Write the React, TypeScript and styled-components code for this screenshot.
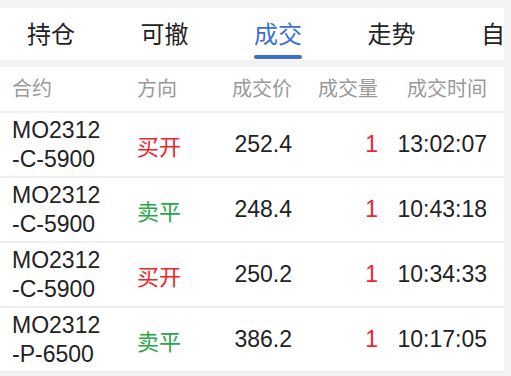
import styled, { createGlobalStyle } from "styled-components";

const GlobalStyle = createGlobalStyle`
  html, body {
    margin: 0;
    padding: 0;
    background: #f3f3f4;
  }
  body {
    font-family: "Liberation Sans", "Noto Sans CJK SC", sans-serif;
    -webkit-font-smoothing: antialiased;
  }
`;

type Side = "buy" | "sell";

const tabs = ["持仓", "可撤", "成交", "走势", "自选"];

const trades: {
  id: number;
  code: string;
  series: string;
  side: Side;
  price: string;
  volume: number;
  time: string;
}[] = [
  { id: 1, code: "MO2312", series: "-C-5900", side: "buy", price: "252.4", volume: 1, time: "13:02:07" },
  { id: 2, code: "MO2312", series: "-C-5900", side: "sell", price: "248.4", volume: 1, time: "10:43:18" },
  { id: 3, code: "MO2312", series: "-C-5900", side: "buy", price: "250.2", volume: 1, time: "10:34:33" },
  { id: 4, code: "MO2312", series: "-P-6500", side: "sell", price: "386.2", volume: 1, time: "10:17:05" },
];

const sideLabel: Record<Side, string> = { buy: "买开", sell: "卖平" };

const App = () => {
  return (
    <Page>
      <GlobalStyle />
      <TabBar>
        {tabs.map((tab) => (
          <Tab key={tab} $active={tab === "成交"}>
            <TabLabel>{tab}</TabLabel>
            <Indicator $visible={tab === "成交"} />
          </Tab>
        ))}
      </TabBar>
      <Table>
        <HeaderRow>
          <HeadCell>合约</HeadCell>
          <HeadCell>方向</HeadCell>
          <HeadCell $right>成交价</HeadCell>
          <HeadCell $right>成交量</HeadCell>
          <HeadCell $right>成交时间</HeadCell>
        </HeaderRow>
        {trades.map(({ id, code, series, side, price, volume, time }) => (
          <TradeRow key={id}>
            <Contract>
              <span>{code}</span>
              <span>{series}</span>
            </Contract>
            <Direction $side={side}>{sideLabel[side]}</Direction>
            <Price>{price}</Price>
            <Volume>{volume}</Volume>
            <Time>{time}</Time>
          </TradeRow>
        ))}
      </Table>
    </Page>
  );
};

const Page = styled.div`
  width: 504px;
  height: 376px;
  overflow: hidden;
  padding-top: 8px;
  box-sizing: border-box;
  background: #f3f3f4;
`;

const TabBar = styled.div`
  display: flex;
  gap: 65.5px;
  height: 52px;
  padding-left: 27px;
  background: #ffffff;
  overflow: hidden;
  white-space: nowrap;
`;

const Tab = styled.div<{ $active: boolean }>`
  display: flex;
  flex-direction: column;
  align-items: center;
  flex: 0 0 auto;
  width: 48px;
  color: ${({ $active }) => ($active ? "#3b6fd2" : "#222222")};
`;

const TabLabel = styled.div`
  margin-top: 11px;
  font-size: 24px;
  line-height: 32px;
`;

const Indicator = styled.div<{ $visible: boolean }>`
  margin-top: 4px;
  width: 48px;
  height: 4px;
  border-radius: 2px;
  background: ${({ $visible }) => ($visible ? "#3b6fd2" : "transparent")};
`;

const Table = styled.div`
  margin-top: 7px;
  display: flex;
  flex-direction: column;
`;

const Columns = styled.div`
  display: grid;
  grid-template-columns: 125px 63px 92px 86px 109px;
  align-items: center;
  padding: 0 17px 0 12px;
  background: #ffffff;
  border-bottom: 2px solid #efeff0;
`;

const HeaderRow = styled(Columns)`
  height: 44px;
`;

const HeadCell = styled.div<{ $right?: boolean }>`
  font-size: 20px;
  line-height: 28px;
  color: #999999;
  text-align: ${({ $right }) => ($right ? "right" : "left")};
  white-space: nowrap;
`;

const TradeRow = styled(Columns)`
  height: 63px;
  font-size: 23px;
  color: #222222;
`;

const Contract = styled.div`
  display: flex;
  flex-direction: column;
  line-height: 29px;
  padding-top: 1px;
`;

const Direction = styled.div<{ $side: Side }>`
  font-size: 22px;
  color: ${({ $side }) => ($side === "buy" ? "#f3242b" : "#2ba748")};
`;

const Price = styled.div`
  text-align: right;
`;

const Volume = styled.div`
  text-align: right;
  color: #f3242b;
`;

const Time = styled.div`
  text-align: right;
`;

export default App;
